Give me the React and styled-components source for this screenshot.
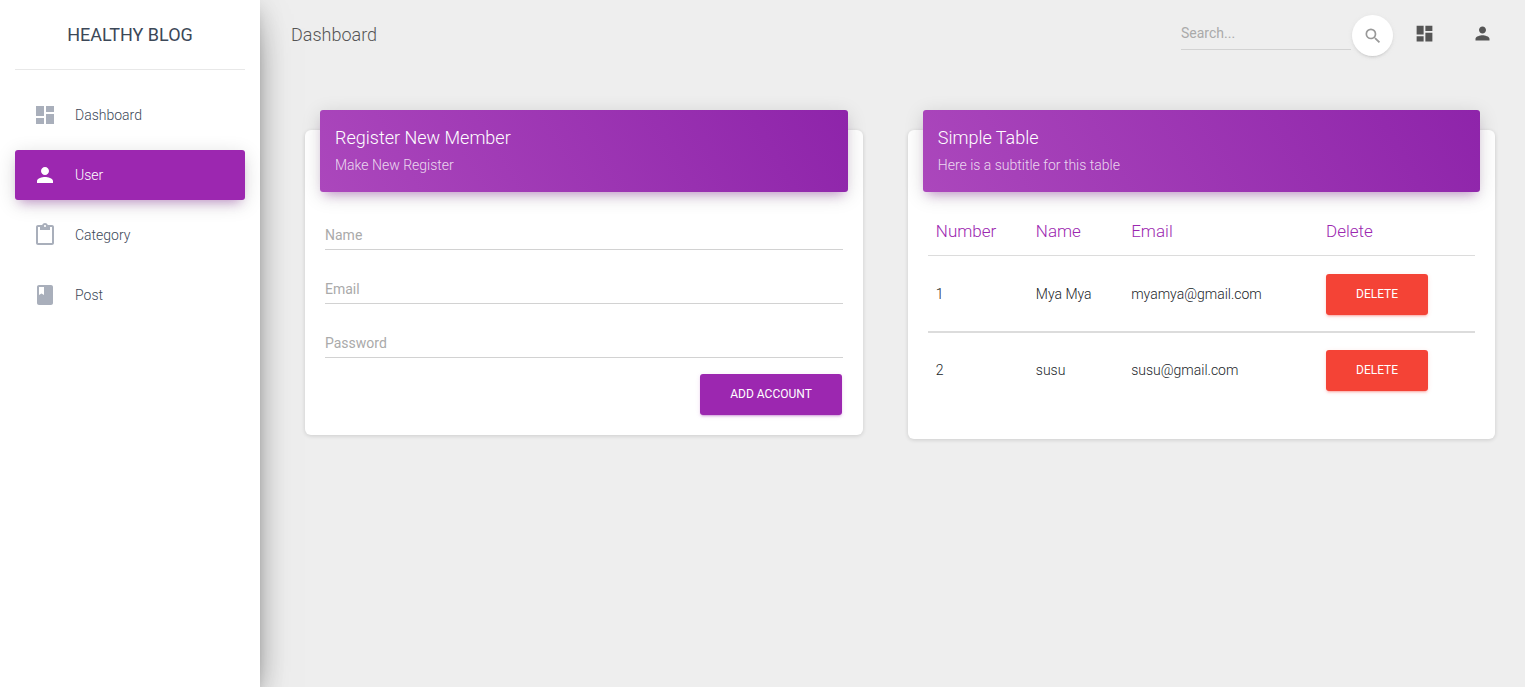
import React from "react";
import styled, { createGlobalStyle, css } from "styled-components";
import {
  MdDashboard,
  MdPerson,
  MdContentPaste,
  MdClass,
  MdSearch,
} from "react-icons/md";

const GlobalStyle = createGlobalStyle`
  *, *::before, *::after { box-sizing: border-box; }
  body {
    margin: 0;
    background: #eee;
    color: #212529;
    font-family: Roboto, "Liberation Sans", sans-serif;
    font-size: 14px;
    font-weight: 300;
    line-height: 20px;
  }
  button, input { font-family: inherit; }
`;

const raisedPurple = css`
  box-shadow: 0 4px 20px 0 rgba(0, 0, 0, 0.14),
    0 7px 10px -5px rgba(156, 39, 176, 0.4);
`;

const Page = styled.div`
  display: flex;
  min-height: 100vh;
`;

const Sidebar = styled.aside`
  position: relative;
  z-index: 2;
  flex: 0 0 260px;
  padding: 0 15px;
  background: #fff;
  box-shadow: 0 16px 38px -12px rgba(0, 0, 0, 0.56),
    0 4px 25px 0 rgba(0, 0, 0, 0.12), 0 8px 10px -5px rgba(0, 0, 0, 0.2);
`;

const Brand = styled.a`
  display: block;
  padding: 20px 0 19px;
  border-bottom: 1px solid #e8e8e8;
  color: #3c4858;
  font-size: 18px;
  font-weight: 400;
  line-height: 30px;
  text-align: center;
  text-decoration: none;
  text-transform: uppercase;
`;

const Menu = styled.ul`
  display: flex;
  flex-direction: column;
  gap: 10px;
  margin: 20px 0 0;
  padding: 0;
  list-style: none;
`;

const MenuLink = styled.a`
  display: flex;
  align-items: center;
  gap: 18px;
  height: 50px;
  padding: 0 18px;
  border-radius: 3px;
  color: #3c4858;
  text-decoration: none;

  svg {
    width: 24px;
    height: 24px;
    color: #a9afbb;
  }

  ${({ $active }) =>
    $active &&
    css`
      background: #9c27b0;
      color: #fff;
      ${raisedPurple}
      svg {
        color: #fff;
      }
    `}
`;

const Main = styled.main`
  flex: 1;
  min-width: 0;
`;

const Navbar = styled.header`
  display: flex;
  align-items: flex-start;
  justify-content: space-between;
  padding: 15px 14px 0 31px;
`;

const PageTitle = styled.h1`
  margin: 0;
  color: #555;
  font-size: 18px;
  font-weight: 300;
  line-height: 40px;
`;

const NavTools = styled.div`
  display: flex;
  align-items: flex-start;
`;

const SearchForm = styled.form`
  display: flex;
  align-items: flex-start;
  gap: 1px;
  margin-right: 2px;
`;

const TextInput = styled.input`
  display: block;
  width: ${({ $width }) => $width || "100%"};
  height: ${({ $tall }) => ($tall ? "36px" : "35px")};
  padding: ${({ $tall }) => ($tall ? "7px 0 0" : "2px 0 0")};
  border: 0;
  border-bottom: 1px solid #d2d2d2;
  border-radius: 0;
  outline: 0;
  background: transparent;
  color: #495057;
  font-size: 14px;
  font-weight: 400;

  &::placeholder {
    color: #aaa;
    opacity: 1;
  }
  &:focus {
    border-bottom-color: #9c27b0;
  }
`;

const SearchButton = styled.button`
  display: flex;
  align-items: center;
  justify-content: center;
  width: 41px;
  height: 41px;
  padding: 0;
  border: 0;
  border-radius: 50%;
  background: #fff;
  color: #999;
  cursor: pointer;
  box-shadow: 0 2px 2px 0 rgba(153, 153, 153, 0.14),
    0 3px 1px -2px rgba(153, 153, 153, 0.2),
    0 1px 5px 0 rgba(153, 153, 153, 0.12);
`;

const NavIconButton = styled.button`
  display: flex;
  align-items: center;
  justify-content: center;
  width: 58px;
  height: 37px;
  padding: 0;
  border: 0;
  background: transparent;
  color: #555;
  cursor: pointer;
`;

const Cards = styled.div`
  display: grid;
  grid-template-columns: minmax(0, 19fr) minmax(0, 20fr);
  align-items: start;
  gap: 45px;
  padding: 74px 30px 30px 45px;
`;

const Card = styled.section`
  border-radius: 6px;
  background: #fff;
  box-shadow: 0 1px 4px 0 rgba(0, 0, 0, 0.14);
`;

const CardHeader = styled.div`
  margin: 0 15px;
  padding: 15px 15px 17px;
  border-radius: 3px;
  background: linear-gradient(60deg, #ab47bc, #8e24aa);
  color: #fff;
  transform: translateY(-20px);
  ${raisedPurple}
`;

const CardTitle = styled.h2`
  margin: 0 0 4px;
  font-size: 18px;
  font-weight: 300;
  line-height: 26px;
`;

const CardSubtitle = styled.p`
  margin: 0;
  color: rgba(255, 255, 255, 0.8);
`;

const RegisterForm = styled.form`
  display: flex;
  flex-direction: column;
  gap: 18px;
  padding: 2px 20px 20px;
`;

const Actions = styled.div`
  display: flex;
  justify-content: flex-end;
  margin-top: -2px;
  padding-right: 1px;
`;

const tones = {
  primary: { color: "#9c27b0", rgb: "156, 39, 176" },
  danger: { color: "#f44336", rgb: "244, 67, 54" },
};

const Button = styled.button`
  display: block;
  height: 41px;
  padding: 0 30px;
  border: 0;
  border-radius: 3px;
  background: ${({ $tone }) => tones[$tone].color};
  color: #fff;
  font-size: 12px;
  font-weight: 400;
  line-height: 17px;
  text-transform: uppercase;
  cursor: pointer;
  box-shadow: ${({ $tone }) => {
    const { rgb } = tones[$tone];
    return `0 2px 2px 0 rgba(${rgb}, 0.14), 0 3px 1px -2px rgba(${rgb}, 0.2), 0 1px 5px 0 rgba(${rgb}, 0.12)`;
  }};
`;

const TableWrap = styled.div`
  padding: 0 20px 32px;
  margin-top: -5px;
`;

const Table = styled.table`
  width: 100%;
  border-collapse: separate;
  border-spacing: 0;

  th {
    padding: 12px 8px;
    border-bottom: 1px solid #dcdcdc;
    color: #9c27b0;
    font-size: 17px;
    font-weight: 300;
    line-height: 24px;
    text-align: left;
  }
  th:first-child {
    width: 100px;
  }
  td {
    padding: 17px 8px;
    vertical-align: middle;
  }
  td:last-child {
    padding: 18px 8px 16px;
  }
  tbody tr + tr td {
    padding-top: 16px;
    border-top: 2px solid #dcdcdc;
  }
  tbody tr + tr td:last-child {
    padding-top: 17px;
  }
`;

const menu = [
  { label: "Dashboard", Icon: MdDashboard },
  { label: "User", Icon: MdPerson, active: true },
  { label: "Category", Icon: MdContentPaste },
  { label: "Post", Icon: MdClass },
];

const fields = [
  { label: "Name", type: "text" },
  { label: "Email", type: "email" },
  { label: "Password", type: "password" },
];

const columns = ["Number", "Name", "Email", "Delete"];

const members = [
  { id: 1, name: "Mya Mya", email: "myamya@gmail.com" },
  { id: 2, name: "susu", email: "susu@gmail.com" },
];

const hold = (event) => event.preventDefault();

export default function App() {
  return (
    <>
      <GlobalStyle />
      <Page>
        <Sidebar>
          <Brand href="#">Healthy Blog</Brand>
          <nav aria-label="Main">
            <Menu>
              {menu.map(({ label, Icon, active }) => (
                <li key={label}>
                  <MenuLink
                    href="#"
                    $active={active}
                    aria-current={active ? "page" : undefined}
                  >
                    <Icon aria-hidden="true" />
                    {label}
                  </MenuLink>
                </li>
              ))}
            </Menu>
          </nav>
        </Sidebar>
        <Main>
          <Navbar>
            <PageTitle>Dashboard</PageTitle>
            <NavTools>
              <SearchForm role="search" onSubmit={hold}>
                <TextInput
                  type="text"
                  $width="170px"
                  placeholder="Search..."
                  aria-label="Search"
                />
                <SearchButton type="submit" aria-label="Search">
                  <MdSearch size={20} />
                </SearchButton>
              </SearchForm>
              <NavIconButton type="button" aria-label="Dashboard">
                <MdDashboard size={21} />
              </NavIconButton>
              <NavIconButton type="button" aria-label="Account">
                <MdPerson size={21} />
              </NavIconButton>
            </NavTools>
          </Navbar>
          <Cards>
            <Card>
              <CardHeader>
                <CardTitle>Register New Member</CardTitle>
                <CardSubtitle>Make New Register</CardSubtitle>
              </CardHeader>
              <RegisterForm onSubmit={hold}>
                {fields.map(({ label, type }) => (
                  <TextInput
                    key={label}
                    type={type}
                    $tall
                    placeholder={label}
                    aria-label={label}
                  />
                ))}
                <Actions>
                  <Button type="submit" $tone="primary">
                    Add account
                  </Button>
                </Actions>
              </RegisterForm>
            </Card>
            <Card>
              <CardHeader>
                <CardTitle>Simple Table</CardTitle>
                <CardSubtitle>Here is a subtitle for this table</CardSubtitle>
              </CardHeader>
              <TableWrap>
                <Table>
                  <thead>
                    <tr>
                      {columns.map((name) => (
                        <th key={name} scope="col">
                          {name}
                        </th>
                      ))}
                    </tr>
                  </thead>
                  <tbody>
                    {members.map(({ id, name, email }) => (
                      <tr key={id}>
                        <td>{id}</td>
                        <td>{name}</td>
                        <td>{email}</td>
                        <td>
                          <Button type="button" $tone="danger">
                            Delete
                          </Button>
                        </td>
                      </tr>
                    ))}
                  </tbody>
                </Table>
              </TableWrap>
            </Card>
          </Cards>
        </Main>
      </Page>
    </>
  );
}
